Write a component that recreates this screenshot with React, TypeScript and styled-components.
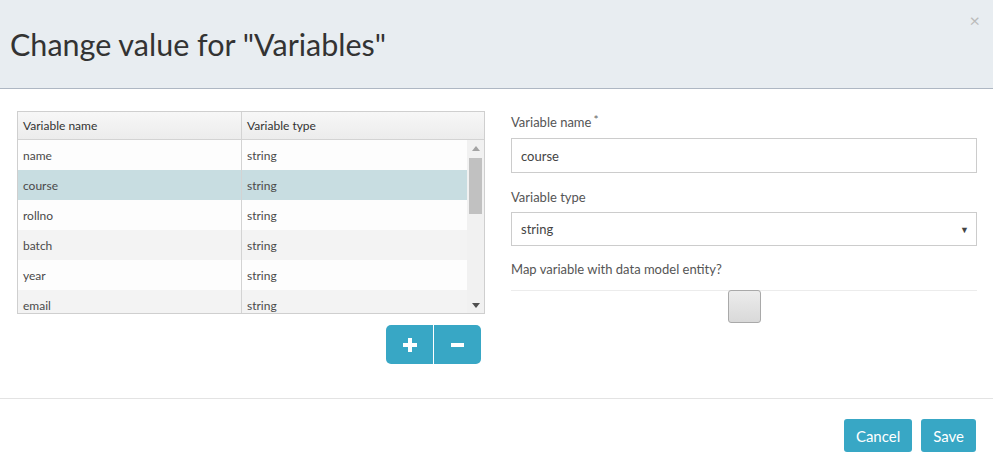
import React from 'react'
import styled, { createGlobalStyle } from 'styled-components'

const GlobalStyle = createGlobalStyle`
    html, body {
        margin: 0;
        padding: 0;
        background: #ffffff;
        font-family: Lato, "Open Sans", Arial, sans-serif;
        color: #444;
    }
    * { box-sizing: border-box; }
`;

const Modal = styled.div`
    width: 993px;
    height: 468px;
    display: flex;
    flex-direction: column;
    background: #fff;
`;

const Header = styled.div`
    height: 89px;
    background: #e8edf1;
    border-bottom: 1px solid #aeb7c3;
    display: flex;
    align-items: center;
    padding: 0 12px 0 10px;
    position: relative;
`;

const Title = styled.h1`
    margin: 0;
    font-size: 30.5px;
    font-weight: 400;
    color: #333;
`;

const Close = styled.span`
    position: absolute;
    top: 11px;
    right: 13px;
    font-size: 18px;
    color: #bbb;
    line-height: 1;
`;

const Content = styled.div`
    display: flex;
    gap: 26px;
    padding: 22px 16px 0 17px;
    height: 310px;
    border-bottom: 1px solid #e3e3e3;
`;

const LeftCol = styled.div`
    width: 468px;
    display: flex;
    flex-direction: column;
`;

const Grid = styled.div`
    height: 203px;
    border: 1px solid #cfcfcf;
    display: flex;
    flex-direction: column;
    font-size: 12px;
    color: #4a4a4a;
`;

const GridHead = styled.div`
    display: flex;
    height: 28px;
    flex-shrink: 0;
    background: linear-gradient(#f7f7f7, #ececec);
    border-bottom: 1px solid #d3d3d3;
    color: #333;
`;

const HeadCell = styled.div<{ $w?: number }>`
    ${p => (p.$w ? `width: ${p.$w}px;` : 'flex: 1;')}
    display: flex;
    align-items: center;
    padding-left: 5px;
    border-left: ${p => (p.$w ? 'none' : '1px solid #d3d3d3')};
`;

const GridBody = styled.div`
    flex: 1;
    display: flex;
    overflow: hidden;
`;

const Rows = styled.div`
    flex: 1;
    overflow: hidden;
`;

const Row = styled.div<{ $tone: 'plain' | 'alt' | 'sel' }>`
    display: flex;
    height: 30px;
    background: ${p => (p.$tone === 'sel' ? '#c8dde1' : p.$tone === 'alt' ? '#f3f3f3' : '#fdfdfd')};
`;

const Cell = styled.div<{ $w?: number }>`
    ${p => (p.$w ? `width: ${p.$w}px;` : 'flex: 1;')}
    display: flex;
    align-items: center;
    padding-left: 5px;
    border-left: ${p => (p.$w ? 'none' : '1px solid #d3d3d3')};
`;

const Track = styled.div`
    width: 17px;
    background: #f1f1f1;
    display: flex;
    flex-direction: column;
    align-items: center;
    padding: 6px 0 5px;
`;

const Thumb = styled.div`
    width: 13px;
    height: 56px;
    background: #c1c1c1;
    margin-top: 7px;
`;

const Spacer = styled.div`
    flex: 1;
`;

const ButtonGroup = styled.div`
    display: flex;
    align-self: flex-end;
    margin: 11px 4px 0 0;
`;

const IconButton = styled.button<{ $side: 'left' | 'right' }>`
    width: ${p => (p.$side === 'left' ? 47 : 48)}px;
    height: 39px;
    border: none;
    background: #38a7c5;
    color: #fff;
    display: flex;
    align-items: center;
    justify-content: center;
    padding: 0;
    border-radius: ${p => (p.$side === 'left' ? '5px 0 0 5px' : '0 5px 5px 0')};
    border-left: ${p => (p.$side === 'right' ? '1px solid #fff' : 'none')};
`;

const RightCol = styled.div`
    flex: 1;
    display: flex;
    flex-direction: column;
    padding-top: 2px;
`;

const Label = styled.div<{ $gap?: number }>`
    font-size: 13px;
    color: #555;
    line-height: 18px;
    margin-bottom: ${p => p.$gap ?? 4}px;
`;

const Required = styled.span`
    font-size: 12px;
    position: relative;
    top: -3px;
    margin-left: 2px;
    color: #666;
`;

const Input = styled.div<{ $gap?: number }>`
    height: 35px;
    border: 1px solid #ccc;
    padding-left: 9px;
    display: flex;
    align-items: center;
    font-size: 13px;
    color: #444;
    margin-bottom: ${p => p.$gap ?? 17}px;
`;

const Select = styled(Input)`
    height: 34px;
    justify-content: space-between;
    padding-right: 7px;
`;

const Caret = styled.span`
    font-size: 9px;
    color: #444;
`;

const Divider = styled.div`
    border-top: 1px solid #ececec;
    display: flex;
    justify-content: center;
`;

const ToggleBox = styled.div`
    width: 33px;
    height: 33px;
    margin-left: 1px;
    margin-top: -1px;
    border: 1px solid #a9a9a9;
    border-radius: 3px;
    background: linear-gradient(#ececec, #d9d9d9);
`;

const Footer = styled.div`
    display: flex;
    justify-content: flex-end;
    gap: 9px;
    padding: 20px 17px 0 0;
`;

const ActionButton = styled.button`
    height: 33px;
    padding: 0 12px;
    border: none;
    border-radius: 3px;
    background: #38a7c5;
    color: #fff;
    font-family: Lato, Arial, sans-serif;
    font-size: 15px;
`;

const variables = [
    { name: 'name', type: 'string' },
    { name: 'course', type: 'string' },
    { name: 'rollno', type: 'string' },
    { name: 'batch', type: 'string' },
    { name: 'year', type: 'string' },
    { name: 'email', type: 'string' },
];

export default function App() {
    const selected = 1;

    return (
        <Modal>
            <GlobalStyle />
            <Header>
                <Title>Change value for "Variables"</Title>
                <Close>×</Close>
            </Header>

            <Content>
                <LeftCol>
                    <Grid>
                        <GridHead>
                            <HeadCell $w={223}>Variable name</HeadCell>
                            <HeadCell>Variable type</HeadCell>
                        </GridHead>
                        <GridBody>
                            <Rows>
                                {variables.map((v, i) => (
                                    <Row key={v.name} $tone={i === selected ? 'sel' : i % 2 ? 'alt' : 'plain'}>
                                        <Cell $w={223}>{v.name}</Cell>
                                        <Cell>{v.type}</Cell>
                                    </Row>
                                ))}
                            </Rows>
                            <Track>
                                <svg width="8" height="5" viewBox="0 0 8 5"><path d="M0 5 L4 0 L8 5 Z" fill="#a3a3a3" /></svg>
                                <Thumb />
                                <Spacer />
                                <svg width="8" height="5" viewBox="0 0 8 5"><path d="M0 0 L8 0 L4 5 Z" fill="#505050" /></svg>
                            </Track>
                        </GridBody>
                    </Grid>

                    <ButtonGroup>
                        <IconButton $side="left" aria-label="add">
                            <svg width="14" height="14" viewBox="0 0 14 14"><path d="M5 0h4v5h5v4H9v5H5V9H0V5h5z" fill="#fff" /></svg>
                        </IconButton>
                        <IconButton $side="right" aria-label="remove">
                            <svg width="13" height="4" viewBox="0 0 13 4"><rect width="13" height="4" fill="#fff" /></svg>
                        </IconButton>
                    </ButtonGroup>
                </LeftCol>

                <RightCol>
                    <Label $gap={6}>Variable name<Required>*</Required></Label>
                    <Input $gap={15}>course</Input>
                    <Label $gap={6}>Variable type</Label>
                    <Select $gap={14}>
                        <span>string</span>
                        <Caret>▼</Caret>
                    </Select>
                    <Label $gap={12}>Map variable with data model entity?</Label>
                    <Divider>
                        <ToggleBox />
                    </Divider>
                </RightCol>
            </Content>

            <Footer>
                <ActionButton>Cancel</ActionButton>
                <ActionButton>Save</ActionButton>
            </Footer>
        </Modal>
    )
}
